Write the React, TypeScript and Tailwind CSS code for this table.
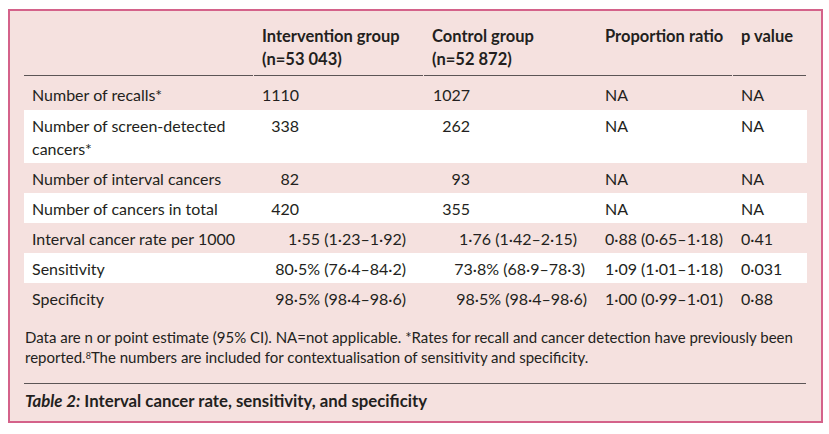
import React from 'react'

const font = { fontFamily: 'Lato, "Liberation Sans", sans-serif' }

type Row = {
  label: React.ReactNode
  a: string
  aw: string
  b: string
  bw: string
  ratio: string
  p: string
  white?: boolean
}

const rows: Row[] = [
  { label: 'Number of recalls*', a: '1110', aw: 'w-[45px]', b: '1027', bw: 'w-[46px]', ratio: 'NA', p: 'NA' },
  { label: <>Number of screen-detected<br />cancers*</>, a: '338', aw: 'w-[45px]', b: '262', bw: 'w-[46px]', ratio: 'NA', p: 'NA', white: true },
  { label: 'Number of interval cancers', a: '82', aw: 'w-[45px]', b: '93', bw: 'w-[46px]', ratio: 'NA', p: 'NA' },
  { label: 'Number of cancers in total', a: '420', aw: 'w-[45px]', b: '355', bw: 'w-[46px]', ratio: 'NA', p: 'NA', white: true },
  { label: 'Interval cancer rate per 1000', a: '1·55 (1·23–1·92)', aw: 'w-[152px]', b: '1·76 (1·42–2·15)', bw: 'w-[153px]', ratio: '0·88 (0·65–1·18)', p: '0·41' },
  { label: 'Sensitivity', a: '80·5% (76·4–84·2)', aw: 'w-[152px]', b: '73·8% (68·9–78·3)', bw: 'w-[161px]', ratio: '1·09 (1·01–1·18)', p: '0·031', white: true },
  { label: 'Specificity', a: '98·5% (98·4–98·6)', aw: 'w-[152px]', b: '98·5% (98·4–98·6)', bw: 'w-[163px]', ratio: '1·00 (0·99–1·01)', p: '0·88' },
]

const cols = 'grid grid-cols-[230px_170px_173px_136px_73px]'

export default function App() {
  return (
    <div className="bg-white w-[829px] h-[434px] pt-[9px] pl-[8px]" style={font}>
      <div className="w-[815px] h-[414px] border-2 border-[#d4628a] bg-[#f5e1df] px-[14px] text-[#231f20]">
        {/* header */}
        <div className={`${cols} mt-[14px] text-[16.5px] leading-[23px] font-bold`}>
          <div className="border-b border-[#5c5556] mr-px h-[51px]" />
          <div className="border-b border-[#5c5556] mr-px pl-2 whitespace-nowrap">Intervention group<br />(n=53 043)</div>
          <div className="border-b border-[#5c5556] pl-2">Control group<br />(n=52 872)</div>
          <div className="border-b border-[#5c5556] mr-px pl-2 whitespace-nowrap">Proportion ratio</div>
          <div className="border-b border-[#5c5556] pl-2 whitespace-nowrap">p value</div>
        </div>

        {/* body */}
        <div className="text-[16px] leading-[23px]">
          {rows.map((r, i) => (
            <div
              key={i}
              className={`${cols} ${r.white ? 'bg-white' : ''} ${i === 0 ? 'pt-[7px] pb-[4px]' : 'pt-[4px] pb-[3px]'}`}
            >
              <div className="pl-2 whitespace-nowrap">{r.label}</div>
              <div><div className={`${r.aw} text-right whitespace-nowrap`}>{r.a}</div></div>
              <div><div className={`${r.bw} text-right whitespace-nowrap`}>{r.b}</div></div>
              <div className="pl-2 whitespace-nowrap">{r.ratio}</div>
              <div className="pl-2">{r.p}</div>
            </div>
          ))}
        </div>

        {/* footnote */}
        <p className="mt-[14px] text-[15px] leading-[20px] pl-px whitespace-nowrap">
          Data are n or point estimate (95% CI). NA=not applicable. *Rates for recall and cancer detection have previously been
          <br />
          reported.<sup className="text-[9px] align-[4px] top-0">8</sup>The numbers are included for contextualisation of sensitivity and specificity.
        </p>

        <div className="mt-[16px] border-t border-[#5c5556] w-[782px] pt-[6px] text-[16.8px] leading-[22px] font-bold pl-px">
          <i>Table 2:</i> Interval cancer rate, sensitivity, and specificity
        </div>
      </div>
    </div>
  )
}
